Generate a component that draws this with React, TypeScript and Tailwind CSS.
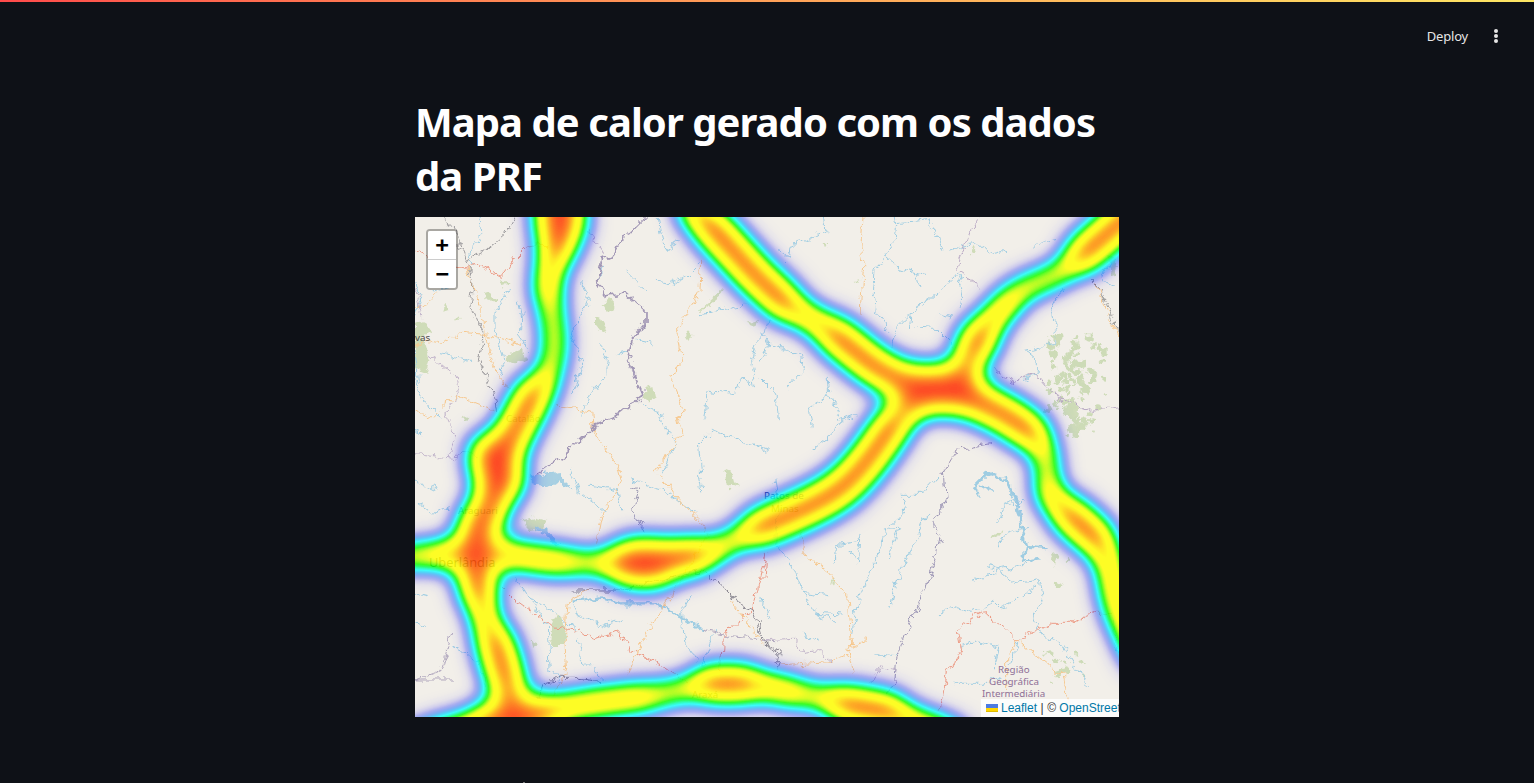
const rivers1 = [
  "M195,0 L200,50 L165,110 L175,150",
  "M0,190 L15,250 L0,300 M100,210 L50,225 M0,400 L10,490",
  "M280,220 L240,290 L240,340 L270,430 L255,470 M310,255 L320,300 L340,280 M320,300 L315,360 L340,400",
  "M500,200 L520,250 L500,300 L470,340 L500,450 L470,530",
  "M560,150 L545,190 M550,380 L580,430 L575,470 L510,560 L500,600",
  "M610,410 L640,400 M665,370 L715,380",
  "M850,140 L810,180 L770,200 L730,190 M860,290 L990,265 M1060,300 L1050,350 L1020,380 L1010,430 L1020,510 L980,480 L960,530 L880,520 L870,600",
  "M630,160 L660,190 L700,225 M730,10 L750,100 L800,70",
  "M0,480 L30,560 L75,600 M75,410 L170,430 M0,640 L20,650",
  "M680,560 L740,600 L780,680 L740,770 M850,680 L890,640 L1060,700 M850,680 L860,770",
]
const rivers2 = [
  "M190,0 L195,40 L160,60 L130,75 L90,85 L85,130 L60,100",
  "M405,0 L410,20 L470,15 L505,10 L530,60 L545,100",
  "M410,20 L405,70 L375,115 L345,160 L340,230 L345,280 L375,320 L380,340",
  "M375,115 L420,155 L470,170 L480,205 M470,170 L500,175",
  "M570,100 L610,85 L640,80 L700,110 L740,100",
  "M590,170 L560,205 L510,250 L450,290 L410,330 L395,390 M450,290 L445,340 M470,330 L530,335 L580,385",
  "M590,170 L610,220 L600,270 M540,290 L575,300",
  "M0,345 L30,385 L80,395 L125,420 L130,460 L85,510 M30,385 L0,430",
  "M0,480 L30,510 L50,550 L55,610",
  "M205,490 L210,530 L150,570 L160,630 M210,530 L240,610 L205,660 L150,700 M240,610 L290,590",
  "M1060,120 L1020,180 L1030,200 L1070,210 M905,220 L875,280 L890,340 L880,380 L800,400 L835,430 L835,470 L790,490",
  "M850,70 L820,100 M860,70 L890,65",
]
const rivers3 = [
  "M0,30 L60,60 M10,100 L55,130 L100,110 M470,5 L490,60 L540,100 L575,130 M530,45 L610,60 L620,120",
  "M650,30 L750,60 L800,100 L840,130 M850,10 L860,60",
  "M295,320 L340,380 L400,470 L405,600 L440,640 M340,380 L420,430 L480,480 M490,510 L500,570 L570,630",
  "M0,370 L40,380 M0,455 L35,475 M110,530 L190,570 L210,650",
  "M830,370 L800,430 L810,520 L850,575 M900,480 L860,590",
  "M470,395 L490,440 L560,470 L620,450 M610,400 L720,400",
]
const rivers4 = [
  "M45,30 L55,90 L50,230 L100,290 L130,370 L170,430 L230,460 M130,370 L200,380 M170,430 L245,435",
  "M530,25 L490,70 L420,70 L440,110 L380,180 L370,220 L300,370 L275,490",
  "M500,130 L450,250 L410,330 L390,410 M370,180 L415,175 L385,260",
  "M300,190 L295,280 M300,210 L230,225 L225,280 M260,240 L290,260",
  "M130,490 L170,510 M350,555 L410,560 M0,385 L30,450",
  "M640,330 L720,300 L770,340 L840,330 L850,380 L820,430 L830,480 L910,530 L940,580 L985,650",
  "M540,435 L570,410 L640,430 L700,400 L720,420 L830,350",
  "M600,530 L650,510 L720,530 L700,600 M770,520 L750,590 M580,640 L680,640 L720,620",
  "M1060,450 L1065,520 L1080,545",
  "M790,90 L730,110 L710,160 M800,170 L740,190 L710,230 M800,280 L720,300 L680,290",
]
const roads1 = [
  "M155,150 L200,285 L210,350 L250,480 L295,520",
  "M0,385 L40,370 L80,380 L130,345 L210,352 L320,385",
  "M0,580 L50,605 L80,575 L125,535 L240,580",
  "M0,270 L30,265 L70,225",
  "M430,565 L530,585 L535,640 L620,770",
  "M860,130 L855,220 L815,290 L785,350 L800,430 L770,490 L805,570 L790,600 L800,650 L720,770",
]
const roads2 = ["M312,0 L305,100 L312,130 L300,290", "M1010,195 L1040,280 L1078,360"]
const roads3 = [
  "M610,0 L620,40 L560,140 L545,220",
  "M730,10 L800,100 L870,170 L880,190 L790,340 L740,420 L665,540 L640,610",
  "M520,360 L460,395 L450,520 L455,600 L415,680",
  "M950,400 L1000,460 L1040,520",
]
const roads4 = [
  "M120,180 L130,250 L210,310 L260,375 L270,480 L275,525 L265,560 L285,610",
  "M275,530 L325,510 M265,560 L210,575 L60,585",
  "M770,510 L740,560 L740,660 M770,510 L910,620 L925,690",
]
const patches = [
  "M540,300 L560,310 L580,345 L565,350 L540,320 Z",
  "M560,260 L590,250 L600,270 L575,285 Z",
  "M860,275 L925,215 L915,240 L870,275 Z",
  "M690,515 L715,510 L722,540 L700,555 L685,535 Z",
  "M285,410 L320,395 L335,425 L305,445 L275,430 Z",
  "M0,320 L30,310 L45,350 L25,360 L45,420 L30,470 L0,460 Z",
  "M205,225 L245,250 L235,260 L205,240 Z",
  "M130,295 L135,310 L120,310 Z M90,260 L100,285 L85,290 Z M255,185 L275,205 L260,210 Z",
  "M140,590 L160,600 L150,615 Z M995,320 L1030,310 L1020,330 Z M810,350 L840,350 L820,365 Z",
  "M2075,120 L2105,120 L2100,180 L2085,170 Z",
  "M1315,185 L1335,185 L1330,195 Z M1220,75 L1240,85 L1230,100 Z M1670,90 L1683,95 L1675,110 Z",
  "M1950,570 L1995,565 L1990,600 L1955,600 Z M1960,625 L1995,620 L1995,650 L1970,660 Z",
  "M322,909 L360,899 L395,909 L385,934 L350,939 Z",
  "M420,1189 L445,1199 L450,1284 L408,1284 L412,1229 Z",
  "M925,759 L950,769 L962,814 L935,804 Z",
  "M350,1274 L365,1279 L355,1294 Z",
  "M1905,1009 L1930,1004 L1920,1044 Z M1950,1014 L1960,1029 L1950,1034 Z",
  "M1920,1094 L1950,1109 L1920,1114 Z M1735,954 L1757,939 L1747,964 Z M1250,1089 L1263,1084 L1257,1109 Z",
  "M1925,1359 L1960,1349 L1960,1374 L1935,1374 Z",
]

// dappled woodland: scattered flecks around a centre, stable between renders
function flecks(cx: number, cy: number, rx: number, ry: number, n: number) {
  return Array.from({ length: n }, (_, i) => {
    const a = Math.sin(i * 12.9898) * 43758.5453
    const b = Math.sin(i * 78.233) * 12543.123
    const c = Math.sin(i * 39.425) * 9631.77
    return {
      x: cx + (a - Math.floor(a) - 0.5) * 2 * rx,
      y: cy + (b - Math.floor(b) - 0.5) * 2 * ry,
      r: 3 + (c - Math.floor(c)) * 8,
    }
  })
}
const woods = [
  ...flecks(1985, 470, 85, 110, 90),
  ...flecks(1990, 620, 45, 40, 22),
  ...flecks(1945, 1350, 60, 50, 14),
]

const heatThin = [
  "M135,60 C133,95 140,105 140,125 C140,140 135,155 128,170",
  "M590,85 C600,75 610,70 625,65 C645,58 655,50 668,38",
  "M625,225 C638,245 628,258 634,280",
  "M150,345 C180,346 200,348 215,347",
  "M295,335 L335,316",
  "M225,480 C250,478 270,472 290,468",
  "M375,475 L420,483",
  "M-20,340 L20,338",
]
const heatBase = [
  "M143,-20 L143,10 C140,30 133,50 133,77",
  "M130,165 C120,180 105,200 95,215 C87,230 85,245 85,255 C80,280 60,310 60,333 C60,370 70,400 78,430 C88,455 95,475 103,520",
  "M20,338 L60,336 C100,336 110,342 150,345",
  "M210,347 L227,346 C270,345 285,340 300,333",
  "M333,316 C365,300 400,290 428,270 C450,250 465,225 478,207 C495,190 515,180 532,173",
  "M532,173 C550,155 560,135 570,115 C578,100 585,92 595,84",
  "M665,40 L692,17 L725,-10",
  "M532,173 C505,172 485,165 460,150 C440,135 430,125 410,110 C385,95 360,85 333,57 C310,35 295,20 275,-10",
  "M532,173 C565,185 600,200 625,225",
  "M634,275 C645,295 665,305 685,325 C700,345 695,370 705,395 L725,440",
  "M-20,535 C10,520 40,510 117,498 C150,490 170,486 230,480",
  "M285,468 C310,466 345,466 380,476",
  "M415,482 C440,485 490,500 540,520",
]
const heatWarm = [
  "M144,-20 L142,32",
  "M118,178 C110,195 100,212 92,230 C85,250 80,270 72,300",
  "M62,305 C58,335 60,355 64,375",
  "M80,425 C85,440 88,452 92,465",
  "M205,346 L280,339",
  "M345,311 C375,298 405,287 428,270 C450,250 462,230 478,207",
  "M295,8 L340,58 M340,58 L370,86",
  "M420,118 C430,125 440,135 460,150",
  "M460,150 C485,165 505,172 532,173",
  "M532,173 C565,185 590,195 615,215",
  "M655,298 L682,322",
  "M558,133 L566,118 M668,38 L725,-12",
  "M70,506 L130,496",
  "M295,467 L330,467",
  "M430,487 L475,495",
]
const heatHot = [
  "M78,240 L85,262",
  "M218,346 L240,346",
  "M510,172 L545,173",
  "M145,-20 L145,8",
]

function MapTiles() {
  return (
    <svg width="704" height="500" viewBox="0 0 704 500" fill="none" strokeLinejoin="round" strokeLinecap="round" className="absolute inset-0">
      <defs>
        <filter id="wiggle" filterUnits="userSpaceOnUse" x="0" y="0" width="704" height="500" colorInterpolationFilters="sRGB">
          <feTurbulence type="fractalNoise" baseFrequency="0.11" numOctaves="3" seed="4" result="noise" />
          <feDisplacementMap in="SourceGraphic" in2="noise" scale="11" xChannelSelector="R" yChannelSelector="G" />
          <feGaussianBlur stdDeviation="0.15" />
        </filter>
        <filter id="heat" filterUnits="userSpaceOnUse" x="-100" y="-100" width="904" height="700" colorInterpolationFilters="sRGB">
          <feGaussianBlur stdDeviation="12" />
          <feColorMatrix type="matrix" values="0 0 0 1 0  0 0 0 1 0  0 0 0 1 0  0 0 0 1 0" />
          <feComponentTransfer>
            <feFuncR type="table" tableValues="0 0 0 0 0 0 0 0 0 0 .1 .45 .8 1 1 1 1 1 1 1 1" />
            <feFuncG type="table" tableValues="0 0 0 .1 .3 .55 .8 1 1 1 1 1 1 1 1 1 .9 .72 .52 .32 .1" />
            <feFuncB type="table" tableValues="1 1 1 1 1 1 1 1 .7 .3 0 0 0 0 0 0 0 0 0 0 0" />
            <feFuncA type="table" tableValues="0 .06 .16 .3 .42 .55 .68 .75 .8 .82 .84 .84 .84 .84 .84 .84 .84 .84 .84 .84 .84" />
          </feComponentTransfer>
        </filter>
      </defs>
      <rect width="704" height="500" fill="#f2efe9" />

      <g filter="url(#wiggle)">
        <g transform="scale(0.3333)">
          {patches.map((d) => <path key={d} d={d} fill="#cfdcb8" />)}
          {woods.map((w) => <circle key={`${w.x}-${w.y}`} cx={w.x} cy={w.y} r={w.r} fill="#cddbb7" />)}
        </g>
        <g transform="scale(0.3333)" stroke="#9fcde2" strokeWidth="3">
          {rivers1.map((d) => <path key={d} d={d} />)}
        </g>
        <g transform="translate(345,0) scale(0.3333)" stroke="#9fcde2" strokeWidth="3">
          {rivers2.map((d) => <path key={d} d={d} />)}
        </g>
        <g transform="translate(0,253) scale(0.3333)" stroke="#9fcde2" strokeWidth="3">
          {rivers3.map((d) => <path key={d} d={d} />)}
          <path d="M350,20 L420,5 L470,50 L430,30 L385,50 L350,45 Z M365,170 L420,200 L435,225 L395,205 Z" fill="#a9d0e2" />
          <path d="M470,395 L560,385 L620,400 L720,400 L780,430 L860,480" strokeWidth="7" />
        </g>
        <g transform="translate(345,253) scale(0.3333)" stroke="#9fcde2" strokeWidth="3">
          {rivers4.map((d) => <path key={d} d={d} />)}
          <path d="M640,50 L680,10 L740,30 L770,90 L785,170 L800,230 L790,270 L840,265" strokeWidth="9" />
          <path d="M660,80 L640,45 M690,60 L665,45 M800,230 L860,235" strokeWidth="6" />
        </g>

        <g transform="scale(0.3333)" stroke="#f6c88f" strokeWidth="3">
          {roads1.map((d) => <path key={d} d={d} />)}
        </g>
        <g transform="translate(345,0) scale(0.3333)" stroke="#f6c88f" strokeWidth="3">
          {roads2.map((d) => <path key={d} d={d} />)}
        </g>
        <g transform="translate(0,253) scale(0.3333)" stroke="#f6c88f" strokeWidth="3">
          {roads3.map((d) => <path key={d} d={d} />)}
        </g>
        <g transform="translate(345,253) scale(0.3333)" stroke="#f6c88f" strokeWidth="3">
          {roads4.map((d) => <path key={d} d={d} />)}
        </g>

        <g transform="scale(0.3333)">
          <path d="M0,100 L60,130 L150,150 L190,145 L260,175 L300,120 L330,90 L390,85" stroke="#ec9a85" strokeWidth="3" />
          <path d="M95,0 L130,70 L155,130 L210,100 L270,50 L295,0 M150,130 L175,190 L165,270 L205,350 L190,430 L235,520 L245,585" stroke="#8d8b8f" strokeWidth="2.5" />
          <path d="M690,0 L650,40 L630,50 L600,110 L560,130 L545,190 L575,240 L630,228 L690,280 L690,320 L655,360 L640,410 L660,480 L685,535 L600,600 L540,625 L495,670 L440,720 L370,770" stroke="#a297b5" strokeWidth="5" />
          <path d="M0,710 L50,715 L120,725 L150,700 L190,715 M520,40 L565,110 M0,210 L20,300 M50,420 L120,480 L130,530 L90,590 L125,660 L100,720" stroke="#b9a9c4" strokeWidth="2.5" />
        </g>
        <g transform="translate(345,0) scale(0.3333)">
          <path d="M660,0 L630,45 L590,160 L660,210 M700,455 L760,495 L830,470 L890,540 L990,580 L1080,570" stroke="#b9a9c4" strokeWidth="3" />
          <path d="M985,175 L1020,210 L1078,350" stroke="#777" strokeWidth="2" />
          <path d="M545,775 L590,700 L690,680" stroke="#a297b5" strokeWidth="3" />
        </g>
        <g transform="translate(0,253) scale(0.3333)">
          <path d="M250,340 L300,390 L400,460 L460,485 L490,475 L535,510 L610,485 L660,550 L750,590 L820,640 M920,600 L925,500 L960,460 L1015,415 L1030,350 L1055,250" stroke="#ec9a85" strokeWidth="3" />
          <path d="M480,360 L620,360 L860,300 L945,360 L960,400 L1015,420 L1040,510 L1080,545 M375,680 L385,640 L430,625 L490,625 L560,635" stroke="#77737f" strokeWidth="2.5" />
          <path d="M860,480 L950,500 L1080,515 M110,490 L80,600 L0,630 L120,630" stroke="#a297b5" strokeWidth="2.5" />
          <path d="M650,50 L670,60 L650,120 L690,180" stroke="#8c88a8" strokeWidth="2.5" />
        </g>
        <g transform="translate(345,253) scale(0.3333)">
          <path d="M1055,430 L1000,430 L930,460 L880,460 L770,510 L675,425 L610,465 L595,480 L605,540 L565,600 L560,640 L540,720 M20,250 L15,330 L0,330" stroke="#ec9a85" strokeWidth="3" />
          <path d="M550,0 L555,90 L520,170 L545,200 L520,290 L490,370 L445,470 L410,570 L405,630 L380,680" stroke="#9c96b5" strokeWidth="3" />
          <path d="M0,510 L100,505 L135,550 L180,545 L215,575 M410,600 L365,590 L330,640" stroke="#b9a9c4" strokeWidth="2.5" />
          <path d="M0,450 L10,510 L60,550 L50,600" stroke="#77737f" strokeWidth="2.5" />
        </g>
      </g>

      <g fontFamily="Noto Sans, sans-serif" fontSize="9.8">
        <text x="91" y="205" fill="#8b8f7a">Catalão</text>
        <text x="0" y="124" fill="#4a4a4a">vas</text>
        <text x="43" y="297" fill="#49606b">Araguari</text>
        <text x="14" y="350" fontSize="12.8" fill="#3f4f4a">Uberlândia</text>
        <text x="277" y="481" fill="#7e8a5a">Araxá</text>
        <text x="583" y="456" fill="#8f6f97">Região</text>
        <text x="574" y="468" fill="#8f6f97">Geográfica</text>
        <text x="567" y="480" fill="#8f6f97">Intermediária</text>
        <text x="349" y="282" fill="#2b4a8c">Patos de</text>
        <text x="356" y="295" fill="#8a8f4a">Minas</text>
      </g>

      <g filter="url(#heat)" stroke="#fff">
        {heatThin.map((d) => <path key={d} d={d} strokeWidth="19" />)}
        {heatBase.map((d) => <path key={d} d={d} strokeWidth="25" />)}
        {heatWarm.map((d) => <path key={d} d={d} strokeWidth="37" />)}
        {heatHot.map((d) => <path key={d} d={d} strokeWidth="50" />)}
      </g>
    </svg>
  )
}

export default function App() {
  return (
    <div className="h-[783px] overflow-hidden bg-[#0e1117] font-['Noto_Sans',sans-serif] text-white">
      <div className="h-[2px] bg-gradient-to-r from-[#ff4b4b] to-[#fde764]" />
      <header className="flex h-[68px] items-center justify-end pr-[36px]">
        <span className="mt-[2px] text-[13px] tracking-[-0.2px] text-[#e6e6e6]">Deploy</span>
        <div className="ml-[26px] flex flex-col gap-[1px]">
          <span className="h-[4px] w-[4px] rounded-full bg-[#e6e6e6]" />
          <span className="h-[4px] w-[4px] rounded-full bg-[#e6e6e6]" />
          <span className="h-[4px] w-[4px] rounded-full bg-[#e6e6e6]" />
        </div>
      </header>
      <main className="mx-auto w-[704px]">
        <h1 className="mt-[25px] mb-[14px] text-[40px] leading-[54px] font-bold tracking-[-0.024em]">
          Mapa de calor gerado com os dados da PRF
        </h1>
        <div className="relative h-[500px] w-[704px] overflow-hidden">
          <MapTiles />
          <div className="absolute top-[12px] left-[11px] flex flex-col rounded-[4px] border-2 border-black/30 bg-clip-padding font-['DejaVu_Sans_Mono',monospace] text-[22px] font-bold text-black">
            <span className="flex h-[29px] w-[28px] items-center justify-center rounded-t-[2px] border-b border-[#ccc] bg-white pb-[2px]">+</span>
            <span className="flex h-[28px] w-[28px] items-center justify-center rounded-b-[2px] bg-white pb-[2px]">−</span>
          </div>
          <div className="absolute bottom-0 left-[566px] flex items-center whitespace-nowrap bg-white/80 px-[5px] font-['Liberation_Sans',sans-serif] text-[12px] leading-[18px] text-[#333]">
            <svg width="12" height="8" viewBox="0 0 12 8" className="mr-[3px]">
              <rect width="12" height="4" fill="#4C7BE1" />
              <rect y="4" width="12" height="3" fill="#FFD500" />
              <rect y="7" width="12" height="1" fill="#E0BC00" />
            </svg>
            <span className="text-[#0078a8]">Leaflet</span>
            <span className="mx-[3.5px]">|</span>
            <span>©&nbsp;</span>
            <span className="text-[#0078a8]">OpenStreetMap</span>
            <span>&nbsp;contributors</span>
          </div>
        </div>
        <div className="mt-[65px] ml-[108px] h-px w-[2px] bg-[#777]" />
      </main>
    </div>
  )
}
